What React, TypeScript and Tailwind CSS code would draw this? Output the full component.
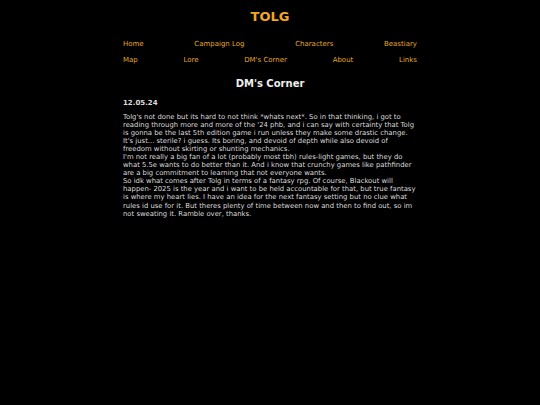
const topLinks = ["Home", "Campaign Log", "Characters", "Beastiary"];
const bottomLinks = ["Map", "Lore", "DM's Corner", "About", "Links"];

function NavRow({ items }: { items: string[] }) {
  return (
    <div className="flex justify-between h-4 items-center">
      {items.map((item) => (
        <a key={item} href="#" className="text-[#e2a72b] hover:underline">
          {item}
        </a>
      ))}
    </div>
  );
}

export default function App() {
  return (
    <div className="min-h-[405px] bg-black text-[#dcdcdc] font-['DejaVu_Sans',Verdana,sans-serif] text-[7px]">
      <div className="w-[294px] mx-auto pt-[9px]">
        <h1 className="text-center text-[13px] font-bold text-[#f2a623] leading-4">TOLG</h1>
        <nav className="mt-[11px] flex flex-col">
          <NavRow items={topLinks} />
          <NavRow items={bottomLinks} />
        </nav>
        <h2 className="mt-[9px] text-center text-[10px] font-bold text-[#eeeeee] leading-[14px]">
          DM's Corner
        </h2>
        <p className="mt-[8px] font-bold leading-[8px]">12.05.24</p>
        <p className="mt-[6px] text-[6.85px] leading-[8.05px]">
          Tolg's not done but its hard to not think *whats next*. So in that thinking, i got to
          reading through more and more of the '24 phb, and i can say with certainty that Tolg is
          gonna be the last 5th edition game i run unless they make some drastic change. It's
          just... sterile? i guess. Its boring, and devoid of depth while also devoid of freedom
          without skirting or shunting mechanics.
          <br />
          I'm not really a big fan of a lot (probably most tbh) rules-light games, but they do what
          5.5e wants to do better than it. And i know that crunchy games like pathfinder are a big
          commitment to learning that not everyone wants.
          <br />
          So idk what comes after Tolg in terms of a fantasy rpg. Of course, Blackout will happen-
          2025 is the year and i want to be held accountable for that, but true fantasy is where
          my heart lies. I have an idea for the next fantasy setting but no clue what rules id use
          for it. But theres plenty of time between now and then to find out, so im not sweating
          it. Ramble over, thanks.
        </p>
      </div>
    </div>
  );
}
